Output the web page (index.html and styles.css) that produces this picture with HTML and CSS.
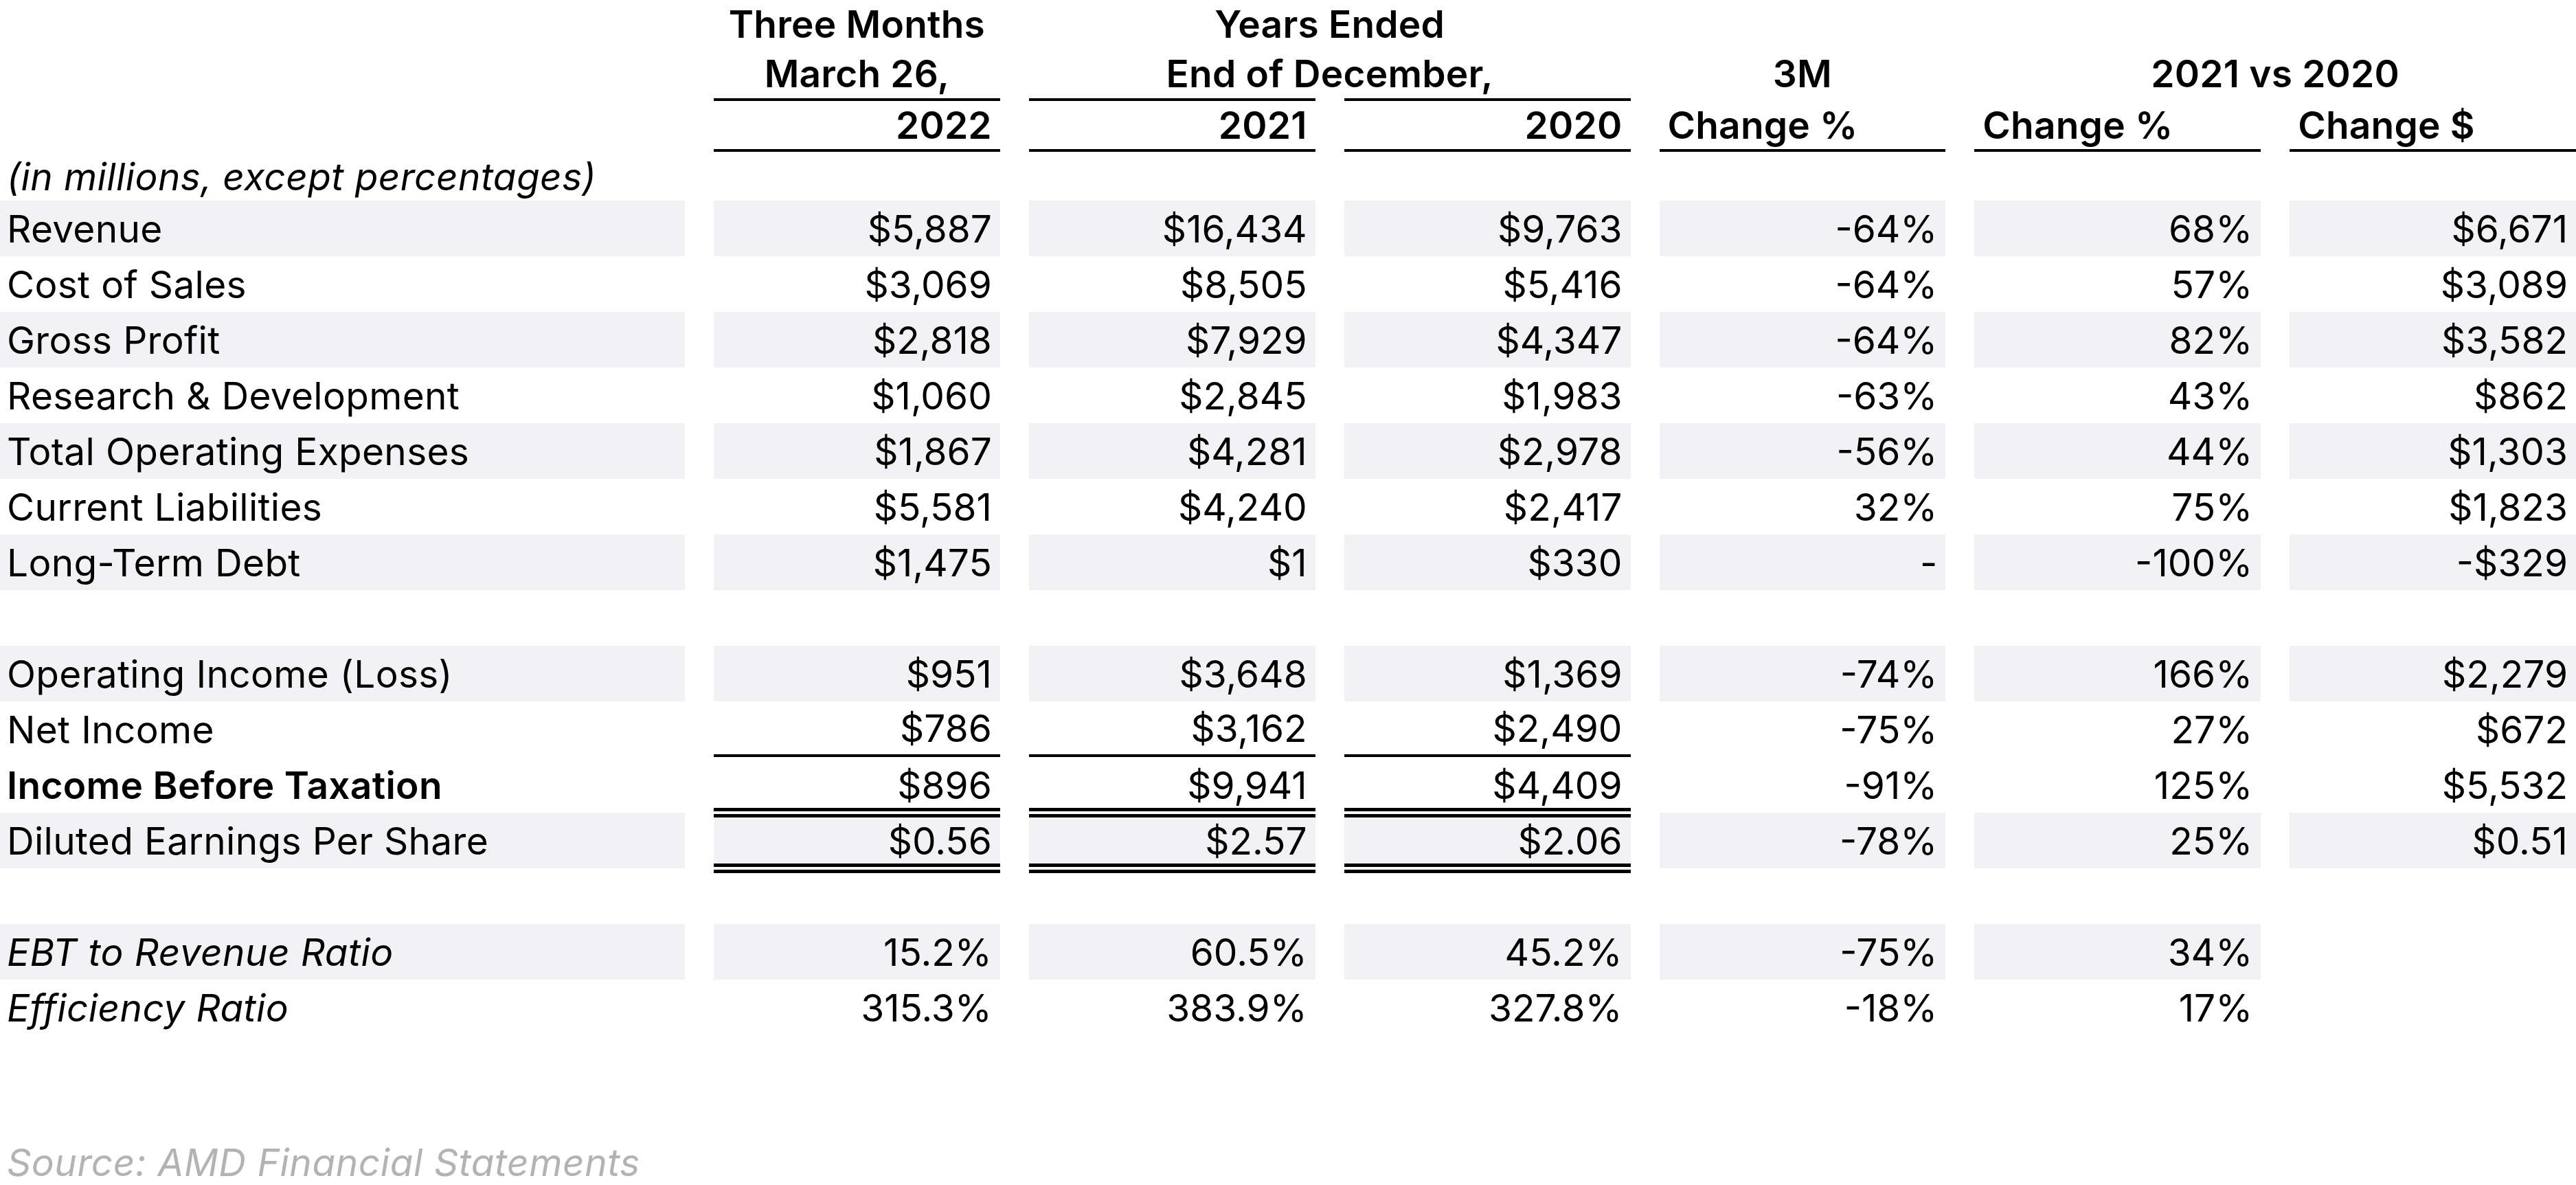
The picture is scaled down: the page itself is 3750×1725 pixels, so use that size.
FILE: index.html
```html
<!DOCTYPE html>
<html lang="en">
<head>
<meta charset="utf-8">
<title>AMD Financial Summary</title>
<link rel="stylesheet" href="styles.css">
</head>
<body>
<div class="sheet">
  <div class="row h1">
    <div></div>
    <div class="hc">Three Months</div>
    <div class="hc span2">Years Ended</div>
  </div>
  <div class="row h2">
    <div></div>
    <div class="hc">March 26,</div>
    <div class="hc span2">End of December,</div>
    <div class="hc">3M</div>
    <div class="hc span2">2021 vs 2020</div>
  </div>
  <div class="row h3">
    <div></div>
    <div class="hy top">2022</div>
    <div class="hy top">2021</div>
    <div class="hy top">2020</div>
    <div class="hy left">Change %</div>
    <div class="hy left">Change %</div>
    <div class="hy left">Change $</div>
  </div>
  <div class="row units">
    <div class="lab it">(in millions, except percentages)</div>
  </div>

  <div class="row body shade">
    <div class="lab">Revenue</div><div class="v">$5,887</div><div class="v">$16,434</div><div class="v">$9,763</div><div class="v">-64%</div><div class="v">68%</div><div class="v">$6,671</div>
  </div>
  <div class="row body">
    <div class="lab">Cost of Sales</div><div class="v">$3,069</div><div class="v">$8,505</div><div class="v">$5,416</div><div class="v">-64%</div><div class="v">57%</div><div class="v">$3,089</div>
  </div>
  <div class="row body shade">
    <div class="lab">Gross Profit</div><div class="v">$2,818</div><div class="v">$7,929</div><div class="v">$4,347</div><div class="v">-64%</div><div class="v">82%</div><div class="v">$3,582</div>
  </div>
  <div class="row body">
    <div class="lab">Research &amp; Development</div><div class="v">$1,060</div><div class="v">$2,845</div><div class="v">$1,983</div><div class="v">-63%</div><div class="v">43%</div><div class="v">$862</div>
  </div>
  <div class="row body shade">
    <div class="lab">Total Operating Expenses</div><div class="v">$1,867</div><div class="v">$4,281</div><div class="v">$2,978</div><div class="v">-56%</div><div class="v">44%</div><div class="v">$1,303</div>
  </div>
  <div class="row body">
    <div class="lab">Current Liabilities</div><div class="v">$5,581</div><div class="v">$4,240</div><div class="v">$2,417</div><div class="v">32%</div><div class="v">75%</div><div class="v">$1,823</div>
  </div>
  <div class="row body shade">
    <div class="lab">Long-Term Debt</div><div class="v">$1,475</div><div class="v">$1</div><div class="v">$330</div><div class="v">-</div><div class="v">-100%</div><div class="v">-$329</div>
  </div>
  <div class="row body"></div>

  <div class="row body shade">
    <div class="lab">Operating Income (Loss)</div><div class="v">$951</div><div class="v">$3,648</div><div class="v">$1,369</div><div class="v">-74%</div><div class="v">166%</div><div class="v">$2,279</div>
  </div>
  <div class="row body">
    <div class="lab">Net Income</div><div class="v under">$786</div><div class="v under">$3,162</div><div class="v under">$2,490</div><div class="v">-75%</div><div class="v">27%</div><div class="v">$672</div>
  </div>
  <div class="row body">
    <div class="lab strong">Income Before Taxation</div><div class="v">$896</div><div class="v">$9,941</div><div class="v">$4,409</div><div class="v">-91%</div><div class="v">125%</div><div class="v">$5,532</div>
  </div>
  <div class="row body shade">
    <div class="lab">Diluted Earnings Per Share</div><div class="v dbl">$0.56</div><div class="v dbl">$2.57</div><div class="v dbl">$2.06</div><div class="v">-78%</div><div class="v">25%</div><div class="v">$0.51</div>
  </div>
  <div class="row body"></div>

  <div class="row body shade">
    <div class="lab it">EBT to Revenue Ratio</div><div class="v">15.2%</div><div class="v">60.5%</div><div class="v">45.2%</div><div class="v">-75%</div><div class="v">34%</div><div class="v blank"></div>
  </div>
  <div class="row body">
    <div class="lab it">Efficiency Ratio</div><div class="v">315.3%</div><div class="v">383.9%</div><div class="v">327.8%</div><div class="v">-18%</div><div class="v">17%</div><div class="v blank"></div>
  </div>
</div>
<p class="source">Source: AMD Financial Statements</p>
</body>
</html>
```

FILE: styles.css
```css
html, body {
  margin: 0;
  padding: 0;
  background: #ffffff;
}

body {
  font-family: "Inter", "Liberation Sans", sans-serif;
  font-size: 55px;
  color: #000000;
  width: 3750px;
  height: 1725px;
  overflow: hidden;
}

.sheet {
  display: flex;
  flex-direction: column;
}

.row {
  display: grid;
  grid-template-columns: 997px repeat(6, 1fr);
  column-gap: 42px;
}

.h1 { height: 70px; }
.h2 { height: 73px; }
.h3 { height: 78px; }
.units { height: 71px; }
.body { height: 81px; }

.hc {
  font-weight: 600;
  display: flex;
  align-items: center;
  justify-content: center;
  white-space: nowrap;
  letter-spacing: 0.2px;
}

.span2 { grid-column: span 2; }

.hy {
  font-weight: 600;
  display: flex;
  align-items: center;
  justify-content: flex-end;
  padding: 0 12px;
  border-top: 4px solid transparent;
  border-bottom: 4px solid #000000;
  white-space: nowrap;
  letter-spacing: 0.2px;
}

.hy.top { border-top-color: #000000; }
.hy.left { justify-content: flex-start; }

.lab {
  display: flex;
  align-items: center;
  padding-left: 10px;
  white-space: nowrap;
  letter-spacing: 0.3px;
}

.it {
  font-style: italic;
  letter-spacing: 0.4px;
}

.strong { font-weight: 600; }

.v {
  display: flex;
  align-items: center;
  justify-content: flex-end;
  padding-right: 12px;
  white-space: nowrap;
}

.shade .lab,
.shade .v {
  background: #f2f2f4;
}

.shade .v.blank { background: transparent; }

.v.under {
  border-bottom: 4px solid #000000;
}

.v.dbl {
  margin: -7px 0;
  border-top: 14px double #000000;
  border-bottom: 14px double #000000;
  background-clip: padding-box;
}

.source {
  margin: 152px 0 0 0;
  padding-left: 10px;
  font-style: italic;
  letter-spacing: 0.55px;
  color: #b3b3b6;
  white-space: nowrap;
}
```
